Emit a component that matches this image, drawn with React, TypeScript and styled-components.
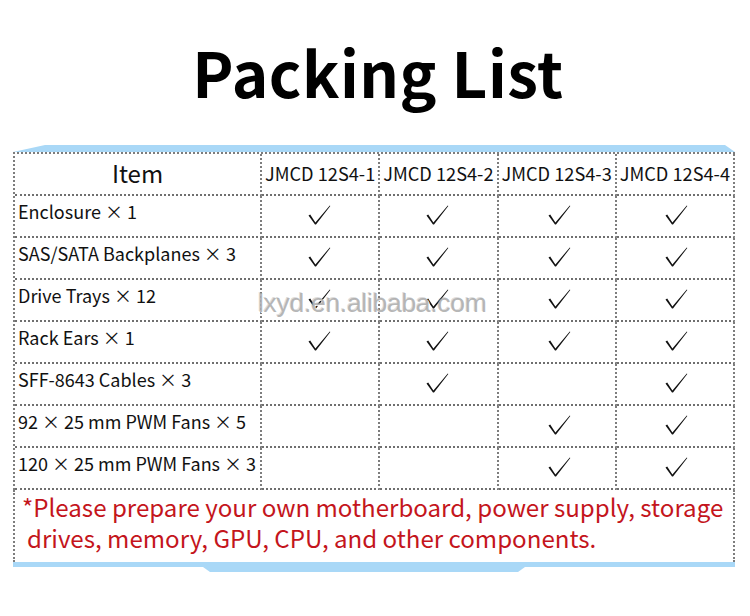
import React from "react";
import styled, { createGlobalStyle } from "styled-components";

const GlobalStyle = createGlobalStyle`
  body {
    margin: 0;
    background: #fff;
    font-family: "Noto Sans CJK SC", "Noto Sans", "Liberation Sans", sans-serif;
  }
`;

const Page = styled.div`
  width: 750px;
  height: 616px;
  position: relative;
  overflow: hidden;
`;

const Title = styled.h1`
  margin: 0;
  height: 145px;
  display: flex;
  align-items: center;
  justify-content: center;
  padding: 0 0 4px 6px;
  box-sizing: border-box;
  font-size: 62px;
  font-weight: 700;
  color: #000;
  letter-spacing: 0.5px;
`;

const Sheet = styled.div`
  margin-left: 13px;
  width: 722px;
`;

const TopBand = styled.div`
  height: 7px;
  background: #a9d8f7;
  clip-path: polygon(32px 0, 712px 0, 100% 100%, 0 100%);
`;

const Grid = styled.div`
  display: grid;
  grid-template-columns: 247px repeat(4, 1fr);
  border-left: 2px dotted #7d7d7d;
  border-top: 2px dotted #7d7d7d;
`;

const Cell = styled.div<{ $head?: boolean; $label?: boolean; $nudge?: number }>`
  height: 42px;
  box-sizing: border-box;
  border-right: 2px dotted #7d7d7d;
  border-bottom: 2px dotted #6f6f6f;
  display: flex;
  align-items: ${(p) => (p.$label ? "flex-start" : "center")};
  justify-content: ${(p) => (p.$label ? "flex-start" : "center")};
  padding: ${(p) => (p.$label ? "2px 0 0 3px" : "0 0 3px")};
  font-size: ${(p) => (p.$head ? "18.2px" : "18px")};
  color: #111;
  white-space: nowrap;
`;

const Mark = styled.span<{ $nudge: number }>`
  display: flex;
  margin-left: ${(p) => p.$nudge * 2}px;
`;

const ItemHead = styled(Cell)`
  font-size: 24px;
  padding-top: 0;
`;

const Note = styled.div`
  border-left: 2px dotted #7d7d7d;
  border-right: 2px dotted #7d7d7d;
  height: 72px;
  box-sizing: border-box;
  padding: 1px 0 0 7px;
  color: #c4151c;
  font-size: 24.1px;
  line-height: 31px;
`;

const Indent = styled.span`
  padding-left: 5px;
`;

const BottomBand = styled.div`
  height: 5px;
  background: #a9d8f7;
`;

const Tab = styled.div`
  margin-left: 190px;
  width: 322px;
  height: 5px;
  background: #a9d8f7;
  clip-path: polygon(0 0, 100% 0, calc(100% - 7px) 100%, 7px 100%);
`;

const Watermark = styled.div`
  position: absolute;
  left: 258px;
  top: 288px;
  font-family: "Liberation Sans", Arial, sans-serif;
  font-size: 26.5px;
  color: rgba(170, 170, 170, 0.85);
  text-shadow: 1px 1px 0 rgba(255, 255, 255, 0.9), -1px -1px 0 rgba(120, 120, 120, 0.25);
  pointer-events: none;
  letter-spacing: -0.3px;
`;

const Check = () => (
  <svg width="23" height="20" viewBox="0 0 23 20">
    <path d="M0.5 10.5 L2.2 9.6 L7.4 17.4 L21.8 0.5 L22.3 1 L8 19.6 L7 19.6 Z" fill="#111" />
  </svg>
);

const models = ["JMCD 12S4-1", "JMCD 12S4-2", "JMCD 12S4-3", "JMCD 12S4-4"];
// checks sit slightly off-centre in the source picture
const nudges = [-1, -1, 3, 2];

const rows: [string, boolean[]][] = [
  ["Enclosure × 1", [true, true, true, true]],
  ["SAS/SATA Backplanes × 3", [true, true, true, true]],
  ["Drive Trays × 12", [true, true, true, true]],
  ["Rack Ears × 1", [true, true, true, true]],
  ["SFF-8643 Cables × 3", [false, true, false, true]],
  ["92 × 25 mm PWM Fans × 5", [false, false, true, true]],
  ["120 × 25 mm PWM Fans × 3", [false, false, true, true]],
];

export default function App() {
  return (
    <Page>
      <GlobalStyle />
      <Title>Packing List</Title>
      <Sheet>
        <TopBand />
        <Grid>
          <ItemHead>Item</ItemHead>
          {models.map((m) => (
            <Cell key={m} $head>
              {m}
            </Cell>
          ))}
          {rows.map(([label, marks]) => (
            <React.Fragment key={label}>
              <Cell $label>{label}</Cell>
              {marks.map((on, i) => (
                <Cell key={i}>
                  {on && (
                    <Mark $nudge={nudges[i]}>
                      <Check />
                    </Mark>
                  )}
                </Cell>
              ))}
            </React.Fragment>
          ))}
        </Grid>
        <Note>
          *Please prepare your own motherboard, power supply, storage
          <br />
          <Indent>drives, memory, GPU, CPU, and other components.</Indent>
        </Note>
        <BottomBand />
        <Tab />
      </Sheet>
      <Watermark>lxyd.en.alibaba.com</Watermark>
    </Page>
  );
}
